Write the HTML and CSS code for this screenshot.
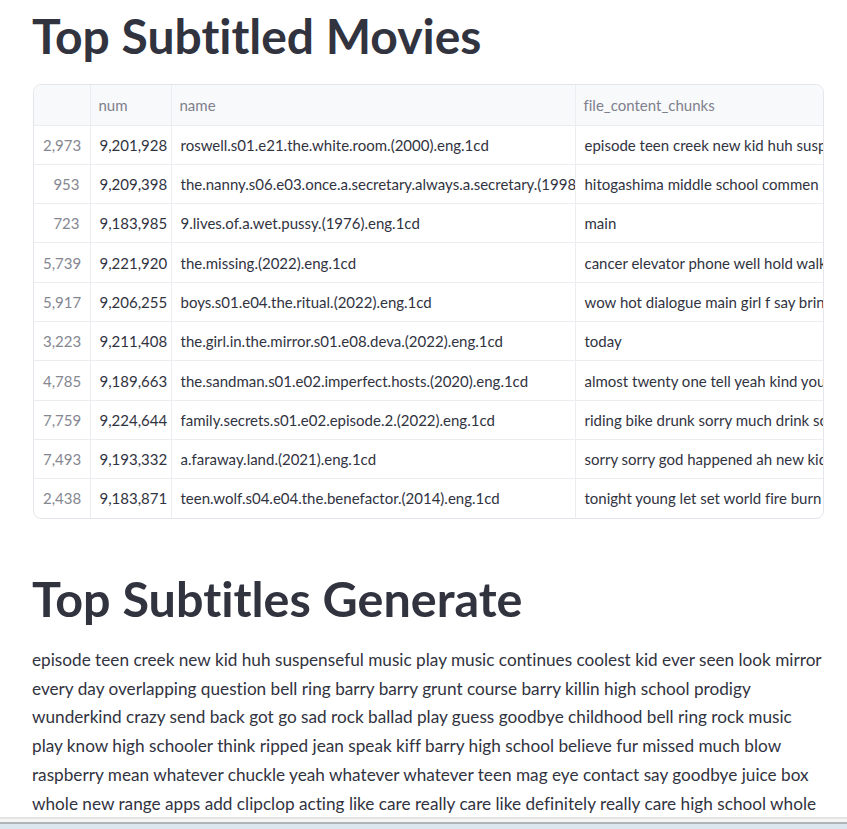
FILE: index.html
```html
<!DOCTYPE html>
<html lang="en">
<head>
<meta charset="utf-8">
<title>Top Subtitled Movies</title>
<link rel="stylesheet" href="styles.css">
</head>
<body>
<main class="main">
  <h1 class="title">Top Subtitled Movies</h1>
  <div class="frame">
    <table class="grid">
      <colgroup>
        <col class="c-idx"><col class="c-num"><col class="c-name"><col class="c-chunks">
      </colgroup>
      <thead>
        <tr><th></th><th>num</th><th>name</th><th>file_content_chunks</th></tr>
      </thead>
      <tbody>
        <tr><td class="idx">2,973</td><td class="num">9,201,928</td><td>roswell.s01.e21.the.white.room.(2000).eng.1cd</td><td>episode teen creek new kid huh susp</td></tr>
        <tr><td class="idx">953</td><td class="num">9,209,398</td><td>the.nanny.s06.e03.once.a.secretary.always.a.secretary.(1998</td><td>hitogashima middle school commen</td></tr>
        <tr><td class="idx">723</td><td class="num">9,183,985</td><td>9.lives.of.a.wet.pussy.(1976).eng.1cd</td><td>main</td></tr>
        <tr><td class="idx">5,739</td><td class="num">9,221,920</td><td>the.missing.(2022).eng.1cd</td><td>cancer elevator phone well hold walk</td></tr>
        <tr><td class="idx">5,917</td><td class="num">9,206,255</td><td>boys.s01.e04.the.ritual.(2022).eng.1cd</td><td>wow hot dialogue main girl f say brin</td></tr>
        <tr><td class="idx">3,223</td><td class="num">9,211,408</td><td>the.girl.in.the.mirror.s01.e08.deva.(2022).eng.1cd</td><td>today</td></tr>
        <tr><td class="idx">4,785</td><td class="num">9,189,663</td><td>the.sandman.s01.e02.imperfect.hosts.(2020).eng.1cd</td><td>almost twenty one tell yeah kind you</td></tr>
        <tr><td class="idx">7,759</td><td class="num">9,224,644</td><td>family.secrets.s01.e02.episode.2.(2022).eng.1cd</td><td>riding bike drunk sorry much drink so</td></tr>
        <tr><td class="idx">7,493</td><td class="num">9,193,332</td><td>a.faraway.land.(2021).eng.1cd</td><td>sorry sorry god happened ah new kid</td></tr>
        <tr><td class="idx">2,438</td><td class="num">9,183,871</td><td>teen.wolf.s04.e04.the.benefactor.(2014).eng.1cd</td><td>tonight young let set world fire burn</td></tr>
      </tbody>
    </table>
  </div>
  <h1 class="title title-second">Top Subtitles Generate</h1>
  <p class="body-text">episode teen creek new kid huh suspenseful music play music continues coolest kid ever seen look mirror<br>every day overlapping question bell ring barry barry grunt course barry killin high school prodigy<br>wunderkind crazy send back got go sad rock ballad play guess goodbye childhood bell ring rock music<br>play know high schooler think ripped jean speak kiff barry high school believe fur missed much blow<br>raspberry mean whatever chuckle yeah whatever whatever teen mag eye contact say goodbye juice box<br>whole new range apps add clipclop acting like care really care like definitely really care high school whole</p>
</main>
<div class="bottom-bar"></div>
</body>
</html>
```
FILE: styles.css
```css
html, body {
  margin: 0;
  padding: 0;
  background: #ffffff;
  overflow: hidden;
}

body {
  font-family: "Lato", "Noto Sans", sans-serif;
  color: #31333f;
  font-variant-ligatures: none;
}

.main {
  padding: 7px 23px 0 32px;
}

.title {
  margin: 0;
  font-size: 48px;
  font-weight: 700;
  line-height: 1.2;
  color: #31333f;
}

.title-second {
  margin-top: 50px;
  font-size: 48.5px;
}

.frame {
  margin-top: 19px;
  margin-left: 1px;
  width: 789px;
  border: 1px solid #e4e6eb;
  border-radius: 8px;
  overflow: hidden;
}

.grid {
  width: 789px;
  border-collapse: collapse;
  table-layout: fixed;
  font-size: 15px;
}

.c-idx { width: 56px; }
.c-num { width: 81px; }
.c-name { width: 404px; }
.c-chunks { width: 248px; }

.grid th,
.grid td {
  padding: 0 9px;
  white-space: nowrap;
  overflow: hidden;
  text-overflow: clip;
  text-align: left;
  border-right: 1px solid #ebedf0;
  border-bottom: 1px solid #ebedf0;
}

.grid th:last-child,
.grid td:last-child {
  border-right: none;
  padding-right: 0;
}

.grid th {
  height: 40px;
  background: #f8f9fb;
  color: #7e808c;
  font-weight: 400;
  padding-left: 8px;
}

.grid td {
  height: 38.3px;
  color: #31333f;
}

.grid tbody tr:last-child td {
  border-bottom: none;
}

.grid td.idx {
  text-align: right;
  color: #858791;
  padding-right: 10px;
}

.grid td.num {
  text-align: right;
  padding-right: 10px;
}

.body-text {
  margin: 19px 0 0;
  font-size: 17.2px;
  line-height: 28.8px;
  white-space: nowrap;
  color: #31333f;
}

.bottom-bar {
  position: fixed;
  left: 0;
  right: 0;
  bottom: 0;
  height: 12px;
  background: linear-gradient(to bottom, #e4e4e4 0, #e4e4e4 2px, #f5f5f5 2px, #f5f5f5 5px, #aeb4ba 5px, #aeb4ba 7px, #dce6ee 7px);
}
```
